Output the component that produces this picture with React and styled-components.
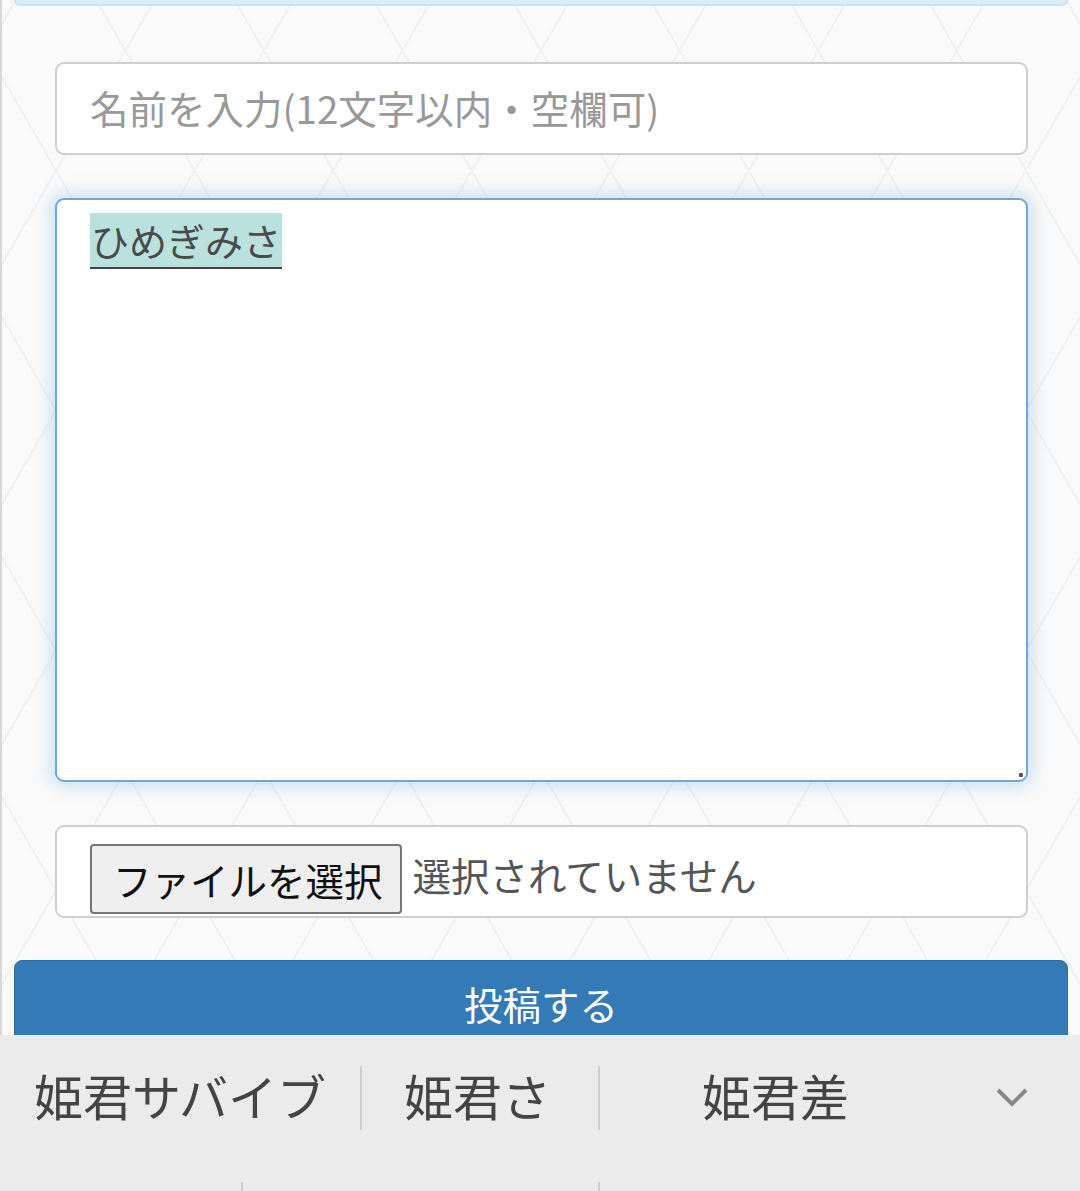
import React from "react";
import styled, { createGlobalStyle } from "styled-components";

const GlobalStyle = createGlobalStyle`
  html, body {
    margin: 0;
    padding: 0;
    background: #fafafa;
  }
  body {
    font-family: "Noto Sans CJK JP", "Noto Sans", sans-serif;
  }
`;

const Screen = styled.div`
  width: 1080px;
  height: 1191px;
  overflow: hidden;
  display: flex;
  flex-direction: column;
`;

const Page = styled.div`
  flex: 1;
  min-height: 0;
  border-left: 2px solid #d8d8d8;
  background-color: #fafafa;
  background-image:
    repeating-linear-gradient(60deg, transparent 0 118px, #f1f1f1 118px 120px),
    repeating-linear-gradient(-60deg, transparent 0 118px, #f1f1f1 118px 120px);
  display: flex;
  flex-direction: column;
  overflow: hidden;
  & > * {
    flex-shrink: 0;
  }
`;

const InfoBox = styled.div`
  margin: 0 12px;
  height: 4px;
  background: #d9edf7;
  border: 2px solid #c4e6ef;
  border-top: none;
  border-radius: 0 0 8px 8px;
`;

const Form = styled.div`
  display: flex;
  flex-direction: column;
  padding: 56px 52px 0 53px;
  gap: 43px;
`;

const Field = styled.div`
  box-sizing: border-box;
  height: ${p => p.$h}px;
  background: #fff;
  border: 2px solid ${p => (p.$focus ? "#6fa8d8" : "#cfcfcf")};
  border-radius: 9px;
  box-shadow: ${p =>
    p.$focus ? "0 0 18px 4px rgba(102, 175, 233, 0.35)" : "none"};
  padding: ${p => p.$pad};
  font-size: 38.5px;
  color: #555;
  position: relative;
`;

const Placeholder = styled.span`
  color: #999;
  line-height: 86px;
`;

const Composing = styled.span`
  display: inline-block;
  background: #b9e2df;
  color: #4a4a4a;
  font-size: 38px;
  line-height: 54px;
  border-bottom: 2px solid #444;
  padding: 0 1px;
`;

const Grip = styled.span`
  position: absolute;
  right: 3px;
  bottom: 3px;
  width: 4px;
  height: 4px;
  background: #555;
  border-radius: 1px;
`;

const FileRow = styled.div`
  display: flex;
  align-items: center;
  gap: 11px;
  height: 100%;
`;

const FileButton = styled.div`
  box-sizing: border-box;
  height: 70px;
  padding: 0 17px 0 21px;
  background: #efefef;
  border: 2px solid #767676;
  border-radius: 4px;
  color: #111;
  display: flex;
  align-items: center;
  font-size: 38.5px;
  margin-top: 17px;
  align-self: flex-start;
`;

const FileStatus = styled.span`
  color: #555;
  font-size: 38.5px;
  margin-top: 4px;
`;

const Submit = styled.div`
  margin: 42px 12px 0 12px;
  height: 90px;
  background: #337ab7;
  border: 1px solid #2e6da4;
  border-radius: 8px 8px 0 0;
  color: #fff;
  font-size: 38.5px;
  text-align: center;
  line-height: 84px;
`;

const Keyboard = styled.div`
  height: 156px;
  flex-shrink: 0;
  background: #ebebeb;
  display: flex;
  flex-direction: column;
`;

const Suggestions = styled.div`
  height: 120px;
  display: flex;
  align-items: center;
`;

const Suggestion = styled.div`
  width: ${p => p.$w}px;
  padding-left: ${p => p.$pl}px;
  box-sizing: border-box;
  font-size: 49px;
  color: #444;
  white-space: nowrap;
  margin-top: -2px;
`;

const Divider = styled.div`
  width: 2px;
  height: 64px;
  background: #cfcfcf;
  margin-top: 6px;
`;

const Chevron = styled.svg`
  margin-left: auto;
  margin-right: 51px;
  margin-top: 4px;
`;

const NextRow = styled.div`
  flex: 1;
  display: flex;
  align-items: flex-end;
`;

const Tick = styled.div`
  width: 2px;
  height: 9px;
  background: #cfcfcf;
  margin-left: ${p => p.$ml}px;
`;

export default function App() {
  return (
    <>
      <GlobalStyle />
      <Screen>
        <Page>
          <InfoBox />
          <Form>
            <Field $h={93} $pad="0 0 0 33px">
              <Placeholder>名前を入力(12文字以内・空欄可)</Placeholder>
            </Field>
            <Field $h={584} $pad="11px 0 0 33px" $focus>
              <Composing>ひめぎみさ</Composing>
              <Grip />
            </Field>
            <Field $h={93} $pad="0 0 0 33px">
              <FileRow>
                <FileButton>ファイルを選択</FileButton>
                <FileStatus>選択されていません</FileStatus>
              </FileRow>
            </Field>
          </Form>
          <Submit>投稿する</Submit>
        </Page>
        <Keyboard>
          <Suggestions>
            <Suggestion $w={360} $pl={34}>姫君サバイブ</Suggestion>
            <Divider />
            <Suggestion $w={236} $pl={42}>姫君さ</Suggestion>
            <Divider />
            <Suggestion $w={300} $pl={102}>姫君差</Suggestion>
            <Chevron width="34" height="22" viewBox="0 0 34 22">
              <path d="M3 4 L17 18 L31 4" fill="none" stroke="#888" strokeWidth="4" />
            </Chevron>
          </Suggestions>
          <NextRow>
            <Tick $ml={241} />
            <Tick $ml={355} />
          </NextRow>
        </Keyboard>
      </Screen>
    </>
  );
}
